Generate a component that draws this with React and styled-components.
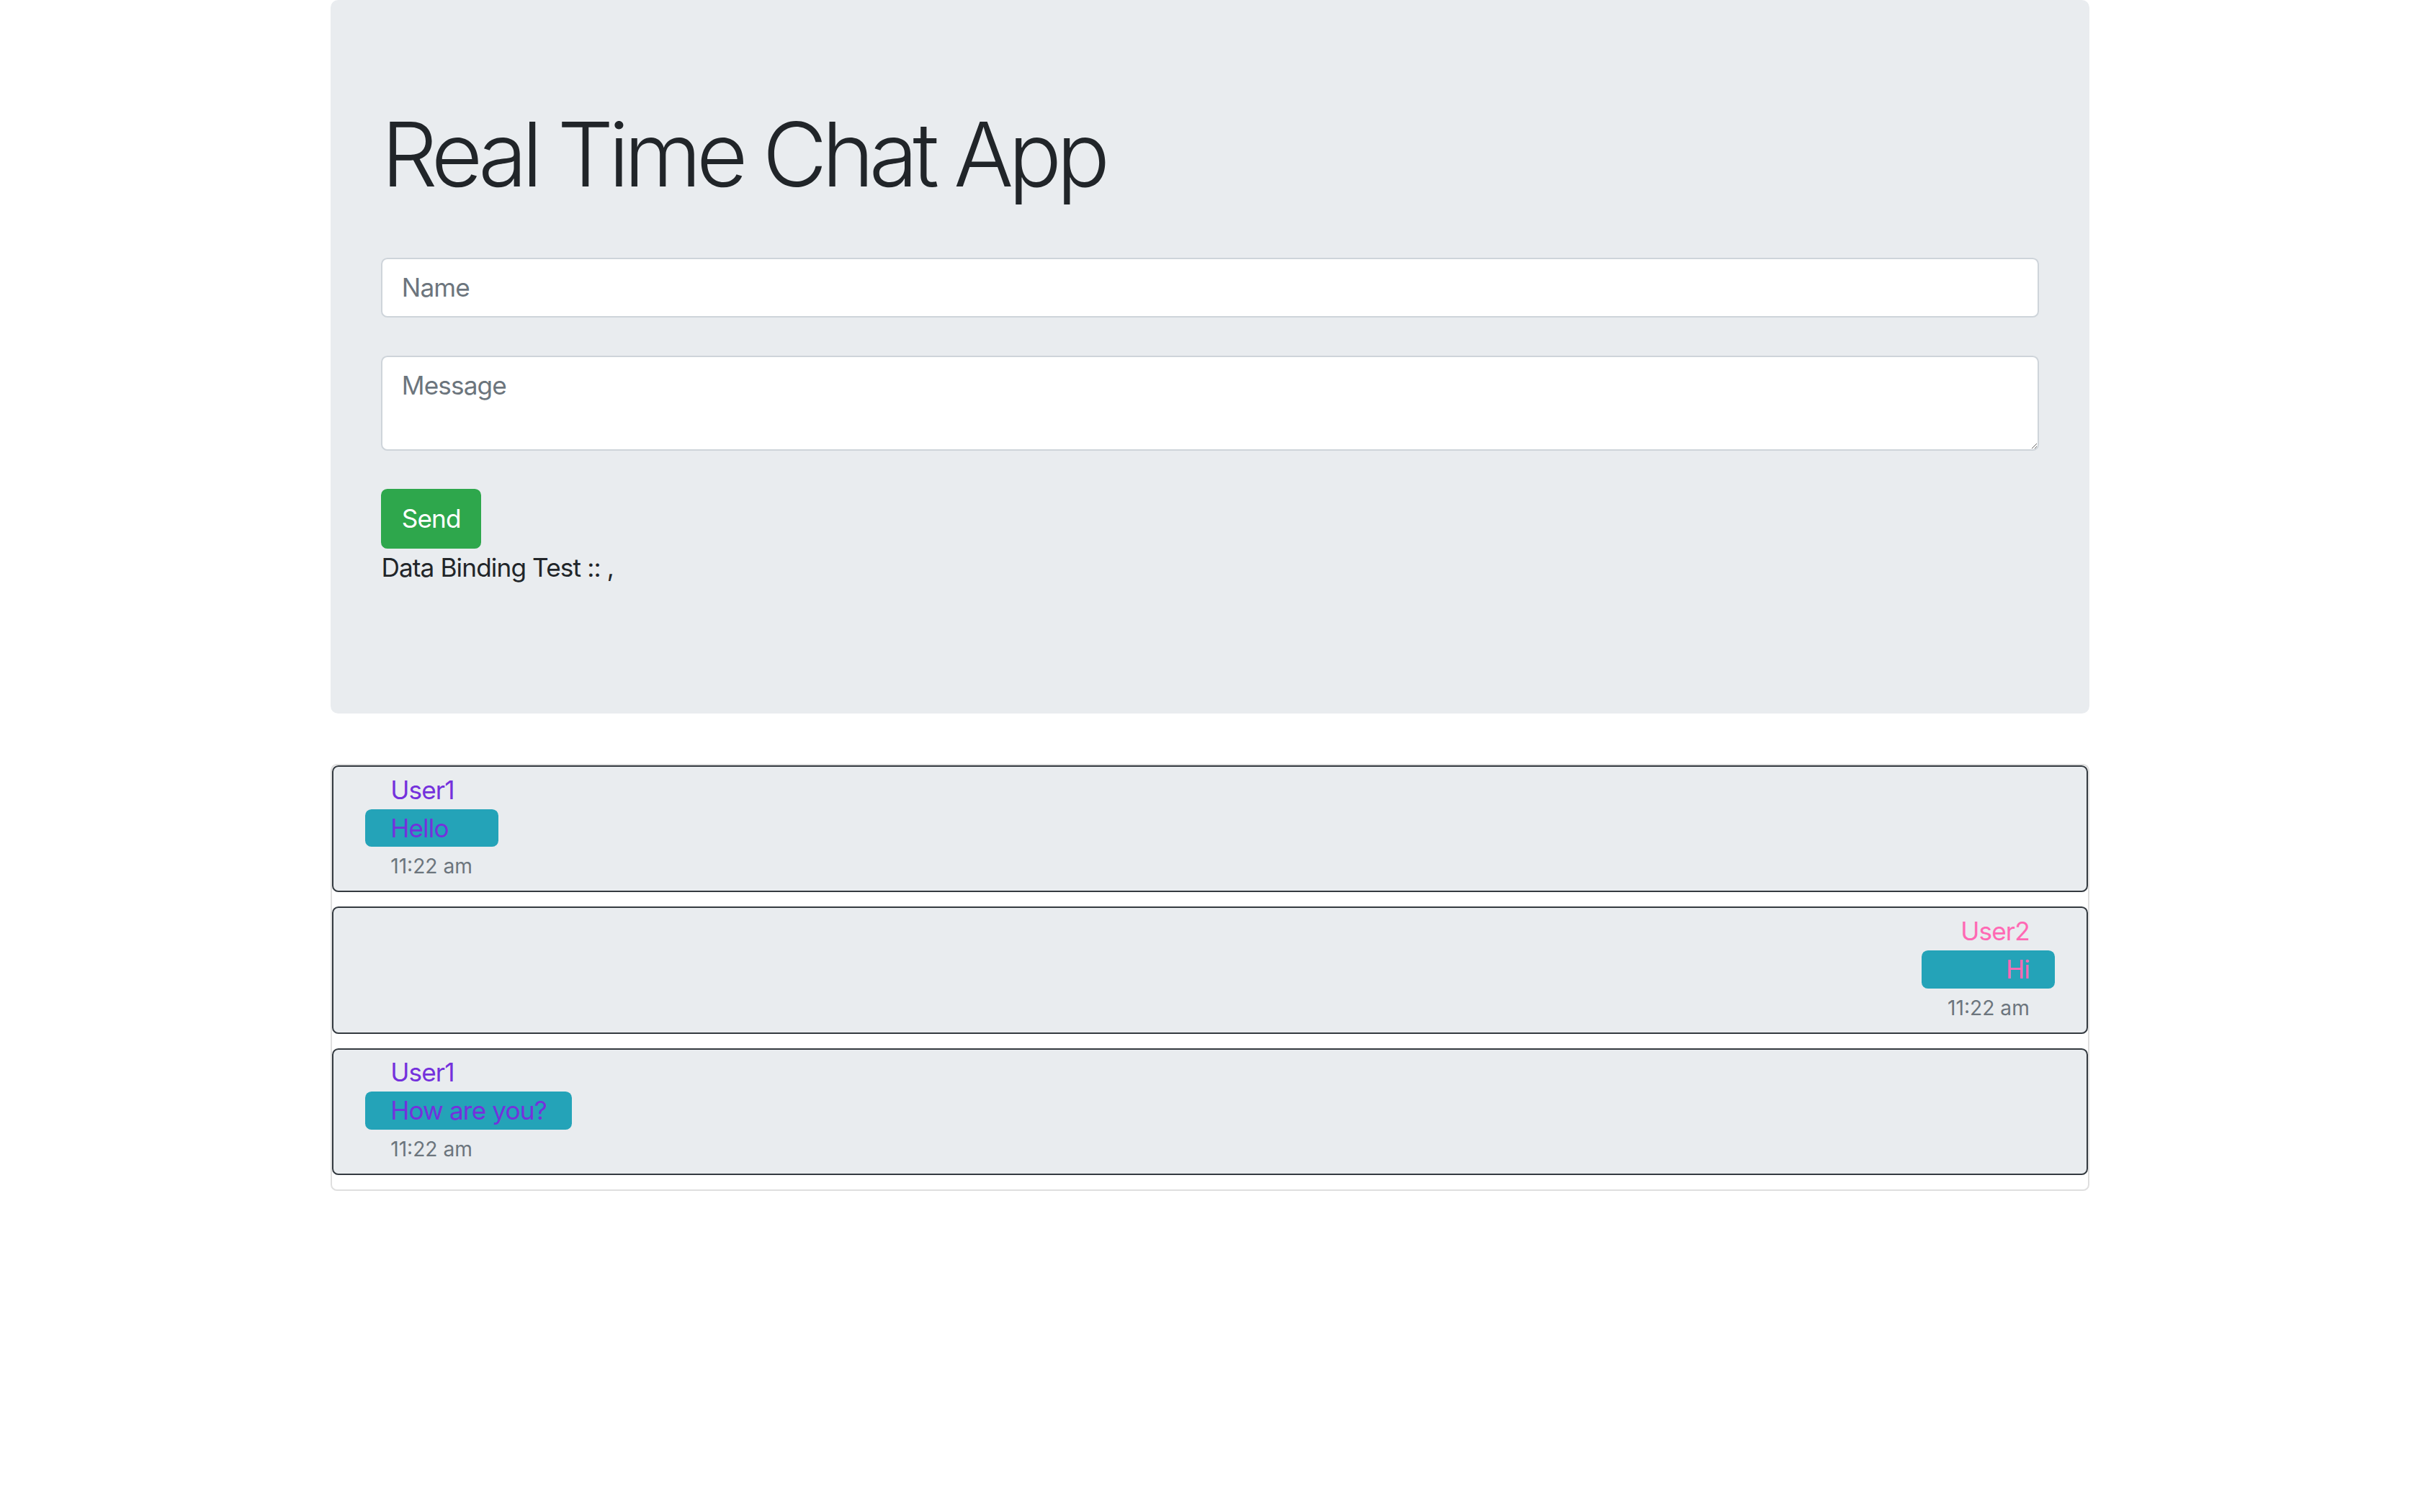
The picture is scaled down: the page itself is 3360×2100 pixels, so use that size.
import styled, { createGlobalStyle } from 'styled-components';

// page was captured at 2.2x, so 1rem here = 16px * 2.2
const GlobalStyle = createGlobalStyle`
  *, *::before, *::after {
    box-sizing: border-box;
  }
  html {
    font-size: 35.2px;
  }
  body {
    margin: 0;
    background: #fff;
    color: #212529;
    font-family: Inter, 'Liberation Sans', sans-serif;
    font-size: 1rem;
    line-height: 1.5;
    letter-spacing: -0.025em;
  }
`;

const Container = styled.div`
  max-width: 71.25rem;
  margin: 0 auto;
  padding: 0 0.9375rem;
`;

const Jumbotron = styled.div`
  background: #e9ecef;
  border-radius: 0.3rem;
  padding: 4rem 2rem;
  margin-bottom: 2rem;
`;

const Title = styled.h1`
  margin: 0 0 1.96rem;
  font-size: 3.5rem;
  font-weight: 300;
  line-height: 1.2;
  letter-spacing: -0.058em;
  color: #212529;
`;

const fieldBase = `
  display: block;
  width: 100%;
  padding: 0.375rem 0.75rem;
  font-family: inherit;
  font-size: 1rem;
  line-height: 1.5;
  letter-spacing: inherit;
  color: #495057;
  background: #fff;
  border: 0.0625rem solid #ced4da;
  border-radius: 0.25rem;
  margin: 0 0 1.5rem;
  &::placeholder {
    color: #6c757d;
  }
`;

const TextInput = styled.input`
  ${fieldBase}
  height: 2.375rem;
`;

const TextArea = styled.textarea`
  ${fieldBase}
  height: 3.75rem;
`;

const SendButton = styled.button`
  display: block;
  padding: 0.375rem 0.75rem;
  font-family: inherit;
  font-size: 1rem;
  line-height: 1.5;
  letter-spacing: inherit;
  color: #fff;
  background: #2ea74c;
  border: 0.0625rem solid #2ea74c;
  border-radius: 0.25rem;
`;

const BindingText = styled.p`
  margin: 0 0 1rem;
`;

const MessageList = styled.div`
  border: 0.0625rem solid #dfdfdf;
  border-radius: 0.25rem;
`;

const MessageCard = styled.div`
  display: flex;
  flex-direction: column;
  align-items: ${({ $side }) => ($side === 'right' ? 'flex-end' : 'flex-start')};
  background: #e9ecef;
  border: 0.0625rem solid #343a40;
  border-radius: 0.25rem;
  padding: 0.1625rem 1.25rem 0.36rem;
  margin-bottom: 0.57rem;
`;

const Sender = styled.span`
  padding: 0 1rem;
  color: ${({ $color }) => $color};
`;

const Bubble = styled.span`
  min-width: 5.25rem;
  padding: 0 1rem;
  border-radius: 0.25rem;
  background: #24a3b8;
  color: ${({ $color }) => $color};
  text-align: ${({ $side }) => $side};
`;

const Time = styled.small`
  margin-top: 0.17rem;
  padding: 0 1rem;
  font-size: 0.8rem;
  line-height: 1.5;
  letter-spacing: 0;
  color: #6c757d;
`;

const messages = [
  { user: 'User1', text: 'Hello', time: '11:22 am', side: 'left', color: '#7431dc' },
  { user: 'User2', text: 'Hi', time: '11:22 am', side: 'right', color: '#ff69b4' },
  { user: 'User1', text: 'How are you?', time: '11:22 am', side: 'left', color: '#7431dc' },
];

export default function App() {
  return (
    <>
      <GlobalStyle />
      <Container>
        <Jumbotron>
          <Title>Real Time Chat App</Title>
          <TextInput type='text' placeholder='Name' />
          <TextArea rows={2} placeholder='Message' />
          <SendButton type='button'>Send</SendButton>
          <BindingText>Data Binding Test :: ,</BindingText>
        </Jumbotron>
        <MessageList>
          {messages.map((m, i) => (
            <MessageCard key={i} $side={m.side}>
              <Sender $color={m.color}>{m.user}</Sender>
              <Bubble $color={m.color} $side={m.side}>
                {m.text}
              </Bubble>
              <Time>{m.time}</Time>
            </MessageCard>
          ))}
        </MessageList>
      </Container>
    </>
  );
}
